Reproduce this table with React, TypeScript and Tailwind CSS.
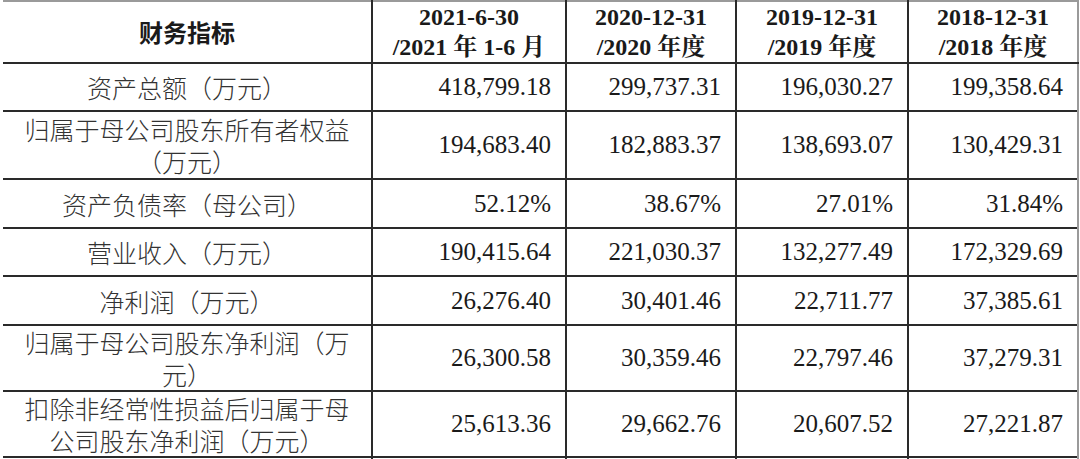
const rows: { label: React.ReactNode; values: string[]; h: string }[] = [
  { label: "资产总额（万元）", values: ["418,799.18", "299,737.31", "196,030.27", "199,358.64"], h: "h-[48px]" },
  {
    label: (
      <>
        归属于母公司股东所有者权益
        <br />
        （万元）
      </>
    ),
    values: ["194,683.40", "182,883.37", "138,693.07", "130,429.31"],
    h: "h-[68px]",
  },
  { label: "资产负债率（母公司）", values: ["52.12%", "38.67%", "27.01%", "31.84%"], h: "h-[49px]" },
  { label: "营业收入（万元）", values: ["190,415.64", "221,030.37", "132,277.49", "172,329.69"], h: "h-[48px]" },
  { label: "净利润（万元）", values: ["26,276.40", "30,401.46", "22,711.77", "37,385.61"], h: "h-[49px]" },
  {
    label: (
      <>
        归属于母公司股东净利润（万
        <br />
        元）
      </>
    ),
    values: ["26,300.58", "30,359.46", "22,797.46", "37,279.31"],
    h: "h-[66px]",
  },
  {
    label: (
      <>
        扣除非经常性损益后归属于母
        <br />
        公司股东净利润（万元）
      </>
    ),
    values: ["25,613.36", "29,662.76", "20,607.52", "27,221.87"],
    h: "h-[66px]",
  },
];

const headers = [
  ["2021-6-30", "/2021 年 1-6 月"],
  ["2020-12-31", "/2020 年度"],
  ["2019-12-31", "/2019 年度"],
  ["2018-12-31", "/2018 年度"],
];

const serif = "font-['Liberation_Serif','Noto_Serif_CJK_SC','Noto_Sans_CJK_SC',serif]";
const cjk = "font-['Noto_Sans_CJK_SC',sans-serif]";

export default function App() {
  return (
    <div className="w-[1080px] h-[459px] overflow-hidden bg-white">
      <table className="ml-[3px] border-collapse table-fixed w-[1075px] text-[#1a1a1a]">
        <colgroup>
          <col className="w-[369px]" />
          <col className="w-[194px]" />
          <col className="w-[170px]" />
          <col className="w-[172px]" />
          <col className="w-[170px]" />
        </colgroup>
        <thead>
          <tr className="h-[62px] border-t-2 border-t-[#9a9a9a]">
            <th className={`border-b-2 border-b-[#2a2a2a] border-r-2 border-r-[#2a2a2a] text-[24px] font-bold ${cjk} text-center`}>
              财务指标
            </th>
            {headers.map((h, i) => (
              <th
                key={i}
                className={`border-b-2 border-b-[#2a2a2a] border-r-2 ${i === 3 ? "border-r-[#9a9a9a]" : "border-r-[#2a2a2a]"} ${serif} font-bold text-[24px] leading-[30px] text-center align-middle`}
              >
                <div>{h[0]}</div>
                <div>{h[1]}</div>
              </th>
            ))}
          </tr>
        </thead>
        <tbody>
          {rows.map((r, i) => (
            <tr key={i} className={`${r.h} border-b-2 border-b-[#2a2a2a]`}>
              <td className={`border-r-2 border-r-[#2a2a2a] ${cjk} font-light text-[#333] text-[25px] leading-[32px] text-center align-middle px-[2px]`}>
                {r.label}
              </td>
              {r.values.map((v, j) => (
                <td
                  key={j}
                  className={`border-r-2 ${j === 3 ? "border-r-[#9a9a9a]" : "border-r-[#2a2a2a]"} ${serif} text-[25px] text-right align-middle pr-[14px]`}
                >
                  {v}
                </td>
              ))}
            </tr>
          ))}
          <tr className="h-[40px]">
            <td className="border-r-2 border-r-[#2a2a2a]"></td>
            <td className="border-r-2 border-r-[#2a2a2a]"></td>
            <td className="border-r-2 border-r-[#2a2a2a]"></td>
            <td className="border-r-2 border-r-[#2a2a2a]"></td>
            <td className="border-r-2 border-r-[#9a9a9a]"></td>
          </tr>
        </tbody>
      </table>
    </div>
  );
}
